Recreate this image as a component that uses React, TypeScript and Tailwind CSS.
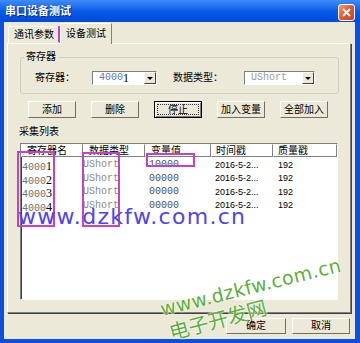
import React from 'react';

const rows = [
  { reg: '4000', last: '1', val: '10000' },
  { reg: '4000', last: '2', val: '00000' },
  { reg: '4000', last: '3', val: '00000' },
  { reg: '4000', last: '4', val: '00000' },
];

function Combo({ className, children }: { className: string; children: React.ReactNode }) {
  return (
    <div className={`flex h-[14px] bg-white border border-[#808080] border-b-white border-r-white ${className}`}>
      <div className="flex-1 flex items-center pl-[6px] overflow-hidden whitespace-nowrap">{children}</div>
      <div className="w-[12px] h-[12px] bg-[#ece9d8] border border-t-white border-l-white border-r-[#404040] border-b-[#404040] flex items-center justify-center">
        <div className="w-0 h-0 border-l-[3px] border-r-[3px] border-t-[3px] border-l-transparent border-r-transparent border-t-black" />
      </div>
    </div>
  );
}

function Btn({ label, def }: { label: string; def?: boolean }) {
  if (def) {
    return (
      <div className="w-[48px] h-[17px] border border-black shadow-[inset_1px_1px_0_#fff,inset_-1px_-1px_0_#808080] flex items-center justify-center p-[2px]">
        <div className="w-full h-full border border-dotted border-[#333] flex items-center justify-center text-[10px] leading-none">
          {label}
        </div>
      </div>
    );
  }
  return (
    <div className="w-[48px] h-[17px] border border-t-white border-l-white border-r-[#716f64] border-b-[#716f64] flex items-center justify-center text-[10px] leading-none">
      {label}
    </div>
  );
}

function HeadCell({ label, pad }: { label: string; pad: string }) {
  return (
    <div className={`h-[13px] flex items-center border-t border-l border-t-white border-l-white border-r border-b border-r-[#808080] border-b-[#808080] text-[10px] leading-none whitespace-nowrap overflow-hidden ${pad}`}>
      {label}
    </div>
  );
}

export default function App() {
  return (
    <div className="relative w-[360px] h-[343px] overflow-hidden bg-[#0c4fe0] flex flex-col font-['Liberation_Sans','Noto_Sans_CJK_SC',sans-serif] text-black">
      {/* title bar */}
      <div className="h-[22px] flex items-center justify-between pl-[5px] pr-[5px] bg-linear-to-b from-[#3f8cf8] via-[#0a5be9] to-[#0348d6]">
        <span className="text-white font-bold text-[11px] leading-none [text-shadow:1px_1px_0_#0a2a8a]">串口设备测试</span>
        <div className="w-[17px] h-[17px] mt-[3px] rounded-[3px] border border-white bg-linear-to-br from-[#f09a7a] via-[#e0592f] to-[#c5431c] flex items-center justify-center">
          <svg width="9" height="9" viewBox="0 0 9 9">
            <path d="M1 1 L8 8 M8 1 L1 8" stroke="#fff" strokeWidth="1.8" />
          </svg>
        </div>
      </div>

      {/* body */}
      <div className="flex-1 ml-[4px] mr-[5px] mb-[4px] bg-[#ece9d8] flex flex-col pl-[3px] pr-[4px]">
        {/* tabs */}
        <div className="h-[21px] flex items-end pl-[1px]">
          <div className="h-[17px] px-[5px] flex items-center border-t border-l border-r border-t-white border-l-white border-r-[#808080] text-[10px] leading-none">
            通讯参数
          </div>
          <div className="relative z-10 -mb-px h-[21px] px-[5px] flex items-center bg-[#ece9d8] border-t border-l border-r border-t-white border-l-white border-r-[#808080] text-[10px] leading-none">
            设备测试
          </div>
        </div>

        {/* tab panel */}
        <div className="h-[270px] border border-t-white border-l-white border-r-[#808080] border-b-[#808080] shadow-[1px_1px_0_#404040] flex flex-col pl-[12px] pr-[11px]">
          <fieldset className="mt-[7px] h-[43px] border border-[#d0d0bf] rounded-[3px] p-0">
            <legend className="ml-[3px] px-[2px] text-[10px] leading-[12px]">寄存器</legend>
            <div className="mt-[8px] flex items-center h-[14px] pl-[14px] text-[10px] leading-none">
              <span className="w-[57px]">寄存器：</span>
              <Combo className="w-[65px]">
                <span className="font-['Liberation_Mono',monospace] text-[10px] text-[#6878a0]">4000</span>
                <span className="font-['Liberation_Serif',serif] text-[12px] leading-none">1</span>
              </Combo>
              <span className="ml-[16px] w-[71px]">数据类型：</span>
              <Combo className="w-[71px]">
                <span className="font-['Liberation_Mono',monospace] text-[10px] text-[#9a9a9a]">UShort</span>
              </Combo>
            </div>
          </fieldset>

          <div className="mt-[7px] flex gap-[15px] pl-[8px]">
            <Btn label="添加" />
            <Btn label="删除" />
            <Btn label="停止" def />
            <Btn label="加入变量" />
            <Btn label="全部加入" />
          </div>

          <div className="mt-[8px] -ml-px text-[10px] leading-[12px]">采集列表</div>

          <div className="mt-[5px] w-[318px] h-[157px] bg-white border border-[#808080] border-r-white border-b-white shadow-[inset_1px_1px_0_#404040]">
            <div className="grid grid-cols-[62px_62px_66px_62px_64px]">
              <HeadCell label="寄存器名" pad="pl-[5px]" />
              <HeadCell label="数据类型" pad="pl-[5px]" />
              <HeadCell label="变量值" pad="pl-[5px]" />
              <HeadCell label="时间戳" pad="pl-[4px]" />
              <HeadCell label="质量戳" pad="pl-[4px]" />
            </div>
            {rows.map((r) => (
              <div key={r.last} className="grid grid-cols-[62px_62px_66px_62px_64px] h-[13.5px] items-center">
                <div className="pl-[1px] whitespace-nowrap leading-none">
                  <span className="font-['Liberation_Mono',monospace] text-[10px] text-[#707070]">{r.reg}</span>
                  <span className="font-['Liberation_Serif',serif] text-[12px]">{r.last}</span>
                </div>
                <div className="font-['Liberation_Mono',monospace] text-[10px] leading-none text-[#8a8a8a]">UShort</div>
                <div className="pl-[4px] font-['Liberation_Mono',monospace] text-[10px] leading-none text-[#505050]">{r.val}</div>
                <div className="pl-[4px] text-[9px] leading-none">2016-5-2...</div>
                <div className="pl-[5px] text-[9px] leading-none">192</div>
              </div>
            ))}
          </div>
        </div>

        {/* dialog buttons */}
        <div className="mt-[5px] flex justify-end gap-[6px] pr-[1px]">
          <div className="w-[60px] h-[16px] border border-t-white border-l-white border-r-[#716f64] border-b-[#716f64] flex items-center justify-center text-[10px] leading-none">
            确定
          </div>
          <div className="w-[58px] h-[16px] border border-t-white border-l-white border-r-[#716f64] border-b-[#716f64] flex items-center justify-center text-[10px] leading-none">
            取消
          </div>
        </div>
      </div>

      {/* annotation boxes */}
      <div className="absolute left-[58px] top-[26px] w-[47px] h-[16px] border-2 border-[#c83fc8]" />
      <div className="absolute left-[17px] top-[151px] w-[38px] h-[76px] border-2 border-[#c83fc8]" />
      <div className="absolute left-[82px] top-[152px] w-[38px] h-[75px] border-2 border-[#c83fc8]" />
      <div className="absolute left-[146px] top-[153px] w-[49px] h-[14px] border-2 border-[#c83fc8]" />

      {/* watermarks */}
      <div className="absolute left-[18px] top-[206px] text-[22px] leading-none tracking-[1.3px] font-['DejaVu_Sans',sans-serif] text-[#5044ee] whitespace-nowrap">
        www.dzkfw.com.cn
      </div>
      <div className="absolute left-[163px] top-[300px] origin-bottom-left -rotate-[14deg] text-[19px] leading-none tracking-[0.4px] font-['DejaVu_Sans',sans-serif] text-[#5fae3a] whitespace-nowrap [text-shadow:0_0_2px_#fff,0_0_2px_#fff]">
        www.dzkfw.com.cn
      </div>
      <div className="absolute left-[172px] top-[322px] origin-bottom-left -rotate-[15deg] text-[20px] leading-none font-['Noto_Sans_CJK_SC',sans-serif] text-[#5fae3a] whitespace-nowrap [text-shadow:0_0_2px_#fff,0_0_2px_#fff]">
        电子开发网
      </div>
    </div>
  );
}
